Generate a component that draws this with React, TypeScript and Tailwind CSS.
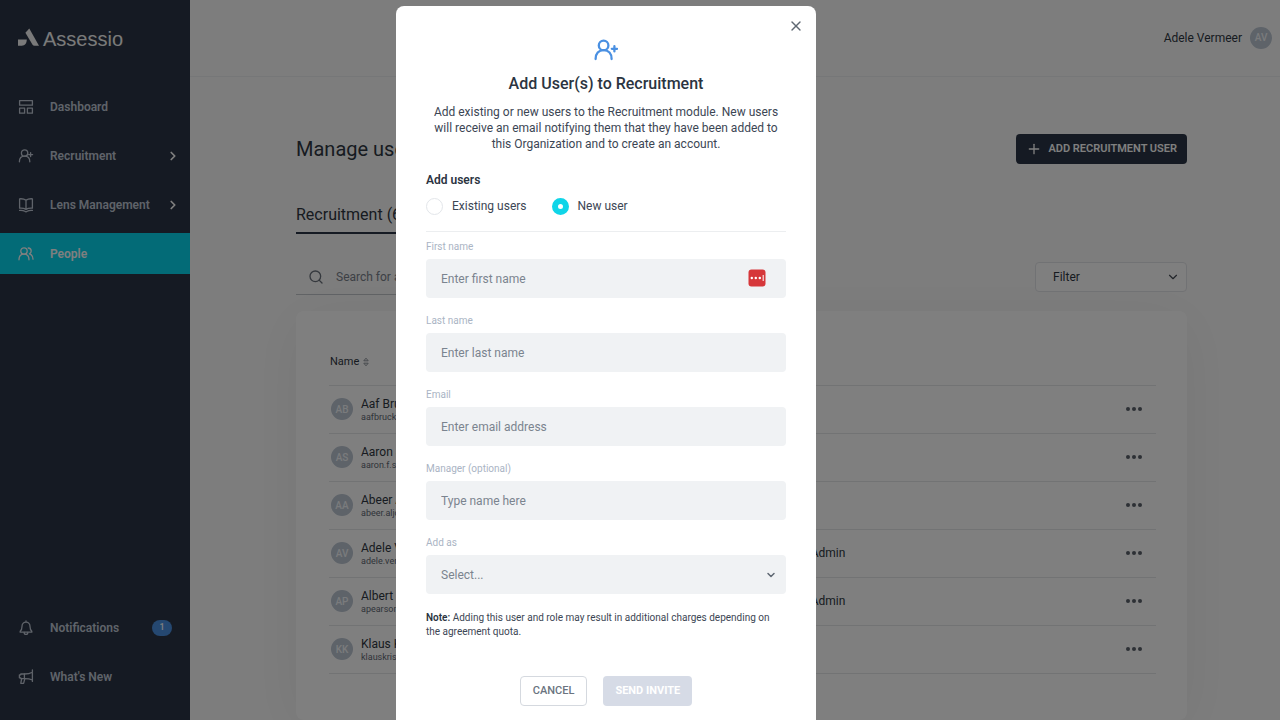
import { useState, type ReactNode } from 'react';
import { ChevronDown, ChevronRight, Plus, Search, X } from 'lucide-react';

interface IUser {
  initials: string;
  name: string;
  email: string;
  role: string;
}

const users: IUser[] = [
  { initials: 'AB', name: 'Aaf Bruckner', email: 'aafbrucks@mail.se', role: '' },
  { initials: 'AS', name: 'Aaron Smith', email: 'aaron.f.sm@mail.se', role: '' },
  { initials: 'AA', name: 'Abeer Aljo', email: 'abeer.aljo@a.se', role: '' },
  { initials: 'AV', name: 'Adele Verm', email: 'adele.ver@a.se', role: 'Admin' },
  { initials: 'AP', name: 'Albert Pears', email: 'apearson@a.se', role: 'Admin' },
  { initials: 'KK', name: 'Klaus Kris', email: 'klauskris@a.se', role: '' },
];

const Icon = ({ children }: { children: ReactNode }) => (
  <svg
    viewBox="0 0 16 16"
    fill="none"
    stroke="currentColor"
    strokeWidth="1.3"
    strokeLinecap="round"
    strokeLinejoin="round"
    className="size-4 shrink-0"
    aria-hidden="true"
  >
    {children}
  </svg>
);

const DashboardIcon = () => (
  <Icon>
    <rect x="1.6" y="1.6" width="12.8" height="4.6" />
    <rect x="1.6" y="9.2" width="5" height="5" />
    <rect x="9.4" y="9.2" width="5" height="5" />
  </Icon>
);

const RecruitmentIcon = () => (
  <Icon>
    <circle cx="6.6" cy="5" r="3.2" />
    <path d="M1.4 13.8c0-3.4 2-5.6 5.2-5.6s5.2 2.2 5.2 5.6" />
    <path d="M12.6 4.6v4M10.6 6.6h4" />
  </Icon>
);

const BookIcon = () => (
  <Icon>
    <path d="M8 3.2C6.4 2 4.4 1.6 1.6 1.8v9.4c2.8-.2 4.8.2 6.4 1.2 1.6-1 3.6-1.4 6.4-1.2V1.8C11.6 1.6 9.6 2 8 3.2zM8 3.2v9" />
    <path d="M1.6 13.4c2.4-.2 4 .1 5.2.9.7.5 1.7.5 2.4 0 1.2-.8 2.8-1.1 5.2-.9" />
  </Icon>
);

const PeopleIcon = () => (
  <Icon>
    <circle cx="6" cy="5" r="3.2" />
    <path d="M1 13.8c0-3.4 1.8-5.6 5-5.6s5 2.2 5 5.6" />
    <path d="M10.2 2c1.9.1 3 1.4 3 3 0 1.3-.7 2.3-1.8 2.8 2.2.7 3.6 2.6 3.6 5.4" />
  </Icon>
);

const BellIcon = () => (
  <Icon>
    <path d="M8 1v1.2M8 2.2c-2.5 0-4 1.8-4 4.2 0 2.6-.6 3.7-1.8 4.8v1h11.6v-1C12.6 10.1 12 9 12 6.4c0-2.4-1.5-4.2-4-4.2z" />
    <path d="M6.2 12.4c0 1.2.7 2 1.8 2s1.8-.8 1.8-2" />
  </Icon>
);

const MegaphoneIcon = () => (
  <Icon>
    <path d="M14.4 1v11.4M14.4 3.2C12 4.6 9.4 5 6.4 5H2.8v.8H1.4v3h1.4v.8h3.6c3 0 5.6.3 8 1.4" />
    <path d="M6.4 5v4.6M3.6 9.8l-.8 4.6h2.8l1.2-4.6" />
  </Icon>
);

const Logo = () => (
  <div className="flex items-start gap-1 px-[17px] text-[#f4f4f4]">
    <svg
      viewBox="0 0 22 18"
      className="mt-px h-[18px] w-[22px]"
      fill="currentColor"
      aria-hidden="true"
    >
      <path d="M1 11.6h8.8c0 3.8-2 6.2-5 6.2H1z" />
      <path d="M8.4 4.8 12.3.4 22 17.8h-4.4c-1 0-1.7-.4-2.2-1.2z" />
    </svg>
    <span className="font-['Liberation_Sans',sans-serif] text-xl leading-6">Assessio</span>
  </div>
);

interface INavItem {
  label: string;
  icon: ReactNode;
  active?: boolean;
  expandable?: boolean;
  badge?: number;
}

const NavItem = ({ label, icon, active, expandable, badge }: INavItem) => (
  <a
    href="#"
    className={
      active
        ? 'flex h-[41px] items-center bg-[#06d6ee] px-[18px] text-white'
        : 'flex h-[41px] items-center px-[18px] text-[#bfc7d4]'
    }
  >
    {icon}
    <span className="ml-4 flex-1 text-xs font-semibold">{label}</span>
    {expandable && <ChevronRight className="-mr-2 size-[14px] text-white" strokeWidth={3} />}
    {badge && (
      <span className="flex h-4 w-5 items-center justify-center rounded-full bg-[#4a90e2] text-[9px] font-medium text-white">
        {badge}
      </span>
    )}
  </a>
);

const Sidebar = () => (
  <aside className="flex w-[190px] shrink-0 flex-col bg-[#2b3546] pt-[27px] pb-[23px]">
    <Logo />
    <nav className="mt-[35px] flex flex-1 flex-col gap-2">
      <NavItem label="Dashboard" icon={<DashboardIcon />} />
      <NavItem label="Recruitment" icon={<RecruitmentIcon />} expandable />
      <NavItem label="Lens Management" icon={<BookIcon />} expandable />
      <NavItem label="People" icon={<PeopleIcon />} active />
      <div className="mt-auto flex flex-col gap-2">
        <NavItem label="Notifications" icon={<BellIcon />} badge={1} />
        <NavItem label="What's New" icon={<MegaphoneIcon />} />
      </div>
    </nav>
  </aside>
);

const Avatar = ({ initials }: { initials: string }) => (
  <span className="flex size-[22px] shrink-0 items-center justify-center rounded-full bg-[#bcc6d2] text-[10px] font-medium text-[#f4f7fa]">
    {initials}
  </span>
);

const UsersTable = () => (
  <div className="mt-4 flex-1 rounded-lg bg-white pt-[29px] pr-[31px] pl-[33px] shadow-[0_8px_60px_rgba(0,0,0,0.06)]">
    <table className="w-full table-fixed text-left">
      <thead>
        <tr className="h-[45px] border-b border-[#e4e6e9]">
          <th className="w-[58%] text-[11px] font-normal">
            <span className="flex items-center gap-1 pl-px">
              Name
              <svg
                viewBox="0 0 6 10"
                className="h-[10px] w-[6px] text-[#8f959d]"
                fill="none"
                stroke="currentColor"
                aria-hidden="true"
              >
                <path d="M.8 3.8 3 1.2l2.2 2.6zM.8 6.2 3 8.8l2.2-2.6z" />
              </svg>
            </span>
          </th>
          <th aria-label="Role" />
          <th aria-label="Actions" className="w-[44px]" />
        </tr>
      </thead>
      <tbody>
        {users.map((user) => (
          <tr key={user.email} className="h-12 border-b border-[#e4e6e9]">
            <td>
              <div className="flex items-center gap-2 pl-[2px]">
                <Avatar initials={user.initials} />
                <div>
                  <div className="text-xs">{user.name}</div>
                  <div className="text-[9px] leading-[10px] text-[#5f6873]">{user.email}</div>
                </div>
              </div>
            </td>
            <td className="pl-[2px] text-xs">{user.role}</td>
            <td className="pr-[14px]">
              <button
                type="button"
                aria-label="More actions"
                className="ml-auto flex h-4 items-center gap-[2px]"
              >
                <span className="size-1 rounded-full bg-[#5a606a]" />
                <span className="size-1 rounded-full bg-[#5a606a]" />
                <span className="size-1 rounded-full bg-[#5a606a]" />
              </button>
            </td>
          </tr>
        ))}
      </tbody>
    </table>
  </div>
);

const ManageUsers = () => (
  <div className="flex min-w-0 flex-1 flex-col">
    <header className="flex h-[77px] shrink-0 items-center justify-end gap-2 border-b border-[#eceef0] pr-2 text-xs">
      Adele Vermeer
      <Avatar initials="AV" />
    </header>
    <main className="flex flex-1 flex-col pt-[57px] pr-[93px] pl-[106px]">
      <div className="flex items-center justify-between">
        <h1 className="text-xl leading-6">Manage users</h1>
        <button
          type="button"
          className="flex h-[30px] items-center gap-[6px] rounded-[4px] bg-[#2b3546] px-[10px] text-[11px] font-semibold text-white"
        >
          <Plus className="size-4" strokeWidth={2} />
          ADD RECRUITMENT USER
        </button>
      </div>
      <div className="mt-[41px] flex">
        <button type="button" className="border-b-2 border-[#2b3546] pb-[7px] text-base leading-5">
          Recruitment (6)
        </button>
      </div>
      <div className="mt-[25px] flex items-start justify-between">
        <label className="flex h-9 w-[300px] items-center border-b border-[#c3c7cc] pl-3">
          <Search className="size-4 text-[#6b727c]" strokeWidth={2} />
          <input
            type="search"
            aria-label="Search users"
            placeholder="Search for a user"
            className="ml-3 flex-1 bg-transparent text-xs outline-none placeholder:text-[#7b828c]"
          />
        </label>
        <div className="relative mt-[3px]">
          <select
            aria-label="Filter"
            className="h-[30px] w-[152px] appearance-none rounded-[4px] border border-[#e2e4e8] bg-white pl-[17px] text-xs"
          >
            <option>Filter</option>
          </select>
          <ChevronDown className="pointer-events-none absolute top-2 right-[7px] size-[14px] text-[#454b55]" />
        </div>
      </div>
      <UsersTable />
    </main>
  </div>
);

interface IField {
  id: string;
  label: string;
  children: ReactNode;
}

const Field = ({ id, label, children }: IField) => (
  <div>
    <label htmlFor={id} className="mb-1 block text-[10px] leading-4 text-[#aab4c4]">
      {label}
    </label>
    <div className="relative">{children}</div>
  </div>
);

const fieldClass =
  'block h-[39px] w-full appearance-none rounded-[4px] bg-[#f0f2f4] px-[15px] text-xs text-[#7b848f] outline-none placeholder:text-[#7b848f]';

const radioClass =
  'size-[17px] appearance-none rounded-full border border-[#e3e6ea] bg-white checked:border-[6px] checked:border-[#10d5e8]';

const AddUserModal = ({ onClose }: { onClose: () => void }) => {
  const [userType, setUserType] = useState('new');

  return (
    <div className="fixed inset-0 flex items-start justify-center overflow-y-auto bg-black/50 pt-[6px] pr-[68px] [scrollbar-width:none]">
      <div
        role="dialog"
        aria-labelledby="modal-title"
        className="relative w-[420px] rounded-lg bg-white px-[30px] pt-8 pb-[30px] text-[#3c4654]"
      >
        <button
          type="button"
          aria-label="Close"
          onClick={onClose}
          className="absolute top-3 right-3 text-[#5f6873]"
        >
          <X className="size-4" strokeWidth={2} />
        </button>
        <svg
          viewBox="0 0 24 24"
          className="mx-auto size-6 text-[#4a90e2]"
          fill="none"
          stroke="currentColor"
          strokeWidth="2.3"
          strokeLinecap="round"
          aria-hidden="true"
        >
          <circle cx="9.6" cy="7.4" r="4.8" />
          <path d="M1.6 21c0-5.4 3-8.8 8-8.8s8 3.4 8 8.8" />
          <path d="M20.4 8.2v5.2M17.8 10.8H23" />
        </svg>
        <h2
          id="modal-title"
          className="mt-3 text-center text-base leading-5 font-medium text-[#2b3441]"
        >
          Add User(s) to Recruitment
        </h2>
        <p className="mt-[10px] px-1 text-center text-xs">
          Add existing or new users to the Recruitment module. New users
          will receive an email notifying them that they have been added to
          this Organization and to create an account.
        </p>
        <form onSubmit={(e) => e.preventDefault()}>
          <fieldset className="mt-5 border-b border-[#eceef0] pb-4">
            <legend className="text-xs font-semibold text-[#2b3441]">Add users</legend>
            <div className="mt-[9px] flex gap-[25px] text-xs leading-[18px]">
              <label className="flex items-center gap-[9px]">
                <input
                  type="radio"
                  name="userType"
                  checked={userType === 'existing'}
                  onChange={() => setUserType('existing')}
                  className={radioClass}
                />
                Existing users
              </label>
              <label className="flex items-center gap-[9px]">
                <input
                  type="radio"
                  name="userType"
                  checked={userType === 'new'}
                  onChange={() => setUserType('new')}
                  className={radioClass}
                />
                New user
              </label>
            </div>
          </fieldset>
          <div className="mt-[7px] flex flex-col gap-[15px]">
            <Field id="firstName" label="First name">
              <input id="firstName" placeholder="Enter first name" className={fieldClass} />
              {/* password manager badge */}
              <svg
                viewBox="0 0 18 18"
                className="absolute top-[10px] right-5 size-[18px]"
                aria-hidden="true"
              >
                <rect x=".5" y=".5" width="17" height="17" rx="3" fill="#d6373a" />
                <circle cx="3.8" cy="9" r="1.2" fill="#fff" />
                <circle cx="7.8" cy="9" r="1.2" fill="#fff" />
                <circle cx="11.8" cy="9" r="1.2" fill="#fff" />
                <path d="M15.2 6v6" stroke="#fff" />
              </svg>
            </Field>
            <Field id="lastName" label="Last name">
              <input id="lastName" placeholder="Enter last name" className={fieldClass} />
            </Field>
            <Field id="email" label="Email">
              <input id="email" type="email" placeholder="Enter email address" className={fieldClass} />
            </Field>
            <Field id="manager" label="Manager (optional)">
              <input id="manager" placeholder="Type name here" className={fieldClass} />
            </Field>
            <Field id="addAs" label="Add as">
              <select id="addAs" className={fieldClass}>
                <option>Select...</option>
                <option>Admin</option>
              </select>
              <ChevronDown
                className="pointer-events-none absolute top-[14px] right-[9px] size-3 text-[#5f6873]"
                strokeWidth={3}
              />
            </Field>
          </div>
          <p className="mt-[17px] text-[10px] leading-[14px]">
            <strong className="font-semibold text-[#2b3441]">Note:</strong> Adding this user and
            role may result in additional charges depending on
            <br />
            the agreement quota.
          </p>
          <div className="mt-[37px] flex justify-center gap-4">
            <button
              type="button"
              onClick={onClose}
              className="h-[30px] rounded-[4px] border border-[#d5d9df] px-3 text-[11px] font-medium text-[#6b7480]"
            >
              CANCEL
            </button>
            <button
              type="submit"
              className="h-[30px] rounded-[4px] bg-[#d6dbe6] px-3 text-[11px] font-bold text-white"
            >
              SEND INVITE
            </button>
          </div>
        </form>
      </div>
    </div>
  );
};

const App = () => {
  const [isOpen, setIsOpen] = useState(true);

  return (
    <div className="flex h-screen overflow-hidden bg-[#fbfbfb] font-[Roboto,sans-serif] text-[#2f3742]">
      <Sidebar />
      <ManageUsers />
      {isOpen && <AddUserModal onClose={() => setIsOpen(false)} />}
    </div>
  );
};

export default App;
